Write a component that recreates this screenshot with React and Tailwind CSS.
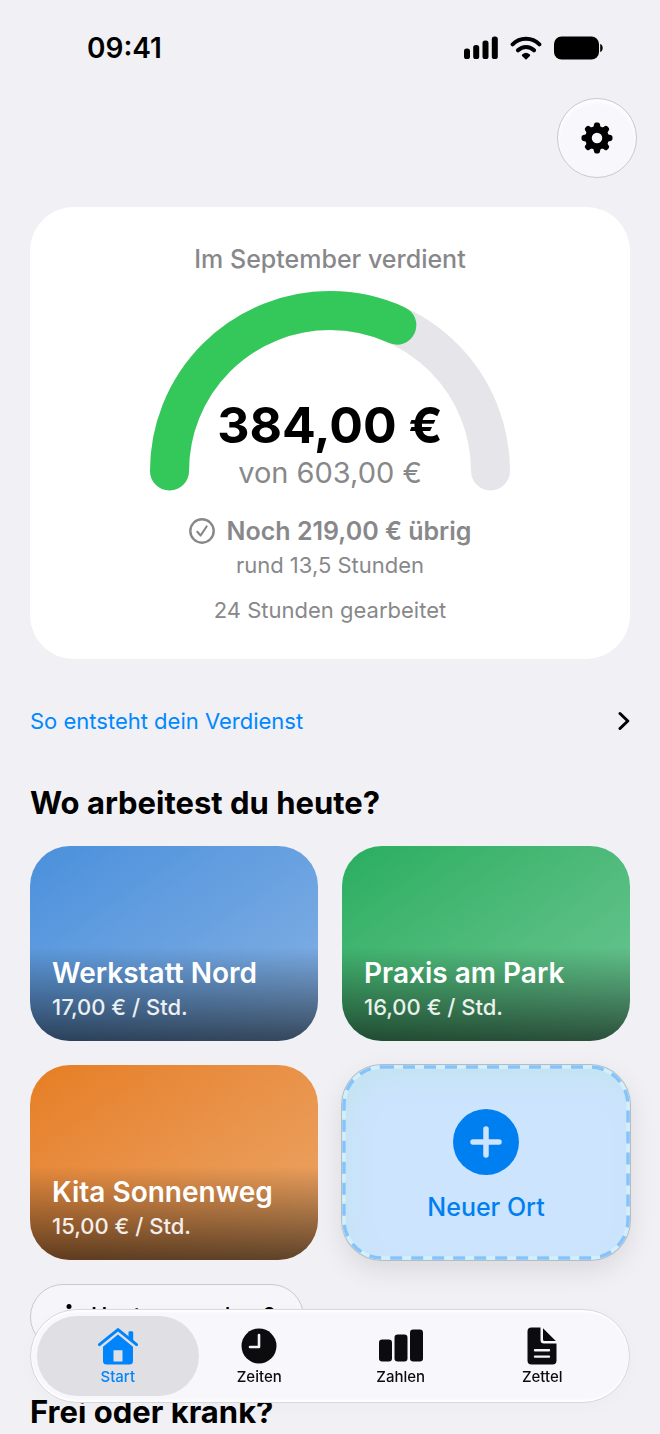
import React, { useState } from 'react';

const EARNED = 384;
const LIMIT = 603;

const workplaces = [
  { id: 'werkstatt', name: 'Werkstatt Nord', rate: '17,00 € / Std.', color: 'from-[#4a90dc] to-[#86b2e4]' },
  { id: 'praxis', name: 'Praxis am Park', rate: '16,00 € / Std.', color: 'from-[#27ae60] to-[#6dc795]' },
  { id: 'kita', name: 'Kita Sonnenweg', rate: '15,00 € / Std.', color: 'from-[#e67e22] to-[#eba768]' },
];

const HomeIcon = () => (
  <svg viewBox="0 0 42 38" className="h-[38px] w-[42px]" fill="currentColor" aria-hidden="true">
    <path d="M31.5 5.5a1.3 1.3 0 0 1 1.3-1.3h2.1a1.3 1.3 0 0 1 1.3 1.3V14l-4.7-4z" />
    <path d="M2.4 17.6 21 2.6l18.6 15" fill="none" stroke="currentColor" strokeWidth="3" strokeLinecap="round" strokeLinejoin="round" />
    <path d="M21 7.6 36 19.8V34a3.6 3.6 0 0 1-3.6 3.6H9.6A3.6 3.6 0 0 1 6 34V19.8zM16.5 23.2v11.4h9V23.2z" fillRule="evenodd" />
  </svg>
);

const ClockIcon = () => (
  <svg viewBox="0 0 36 36" className="size-9" aria-hidden="true">
    <circle cx="18" cy="18" r="17.5" fill="currentColor" />
    <path d="M18 7v12H9" fill="none" stroke="#f4f4f8" strokeWidth="2.6" strokeLinecap="round" strokeLinejoin="round" />
  </svg>
);

const BarsIcon = () => (
  <svg viewBox="0 0 44 34" className="h-[34px] w-11" fill="currentColor" aria-hidden="true">
    <rect x="0" y="10.5" width="13" height="22" rx="3.2" />
    <rect x="15.5" y="5.5" width="13" height="27" rx="3.2" />
    <rect x="31" y="0.5" width="13" height="32" rx="3.2" />
  </svg>
);

const NoteIcon = () => (
  <svg viewBox="0 0 30 38" className="h-[38px] w-[30px]" aria-hidden="true">
    <path d="M4.5 .5h9V13a3.5 3.5 0 0 0 3.5 3.5h12.500v17a4 4 0 0 1-4 4h-21a4 4 0 0 1-4-4v-29a4 4 0 0 1 4-4z" fill="currentColor" />
    <path d="M16 1.2 28.800 14H17.500a1.500 1.500 0 0 1-1.500-1.500z" fill="currentColor" />
    <path d="M8 23.300h14M8 29.600h14" stroke="#f4f4f8" strokeWidth="2.4" strokeLinecap="round" />
  </svg>
);

const tabs = [
  { id: 'start', label: 'Start', Icon: HomeIcon },
  { id: 'zeiten', label: 'Zeiten', Icon: ClockIcon },
  { id: 'zahlen', label: 'Zahlen', Icon: BarsIcon },
  { id: 'zettel', label: 'Zettel', Icon: NoteIcon },
];

const StatusBar = () => (
  <div className="flex h-24 items-center justify-between pr-14 pl-[87px]">
    <span className="text-[28px] leading-8 font-semibold">09:41</span>
    <div className="flex items-center gap-3">
      <svg viewBox="0 0 35 24" className="h-6 w-[35px]" aria-hidden="true">
        <rect x="1" y="12.5" width="6" height="10.5" rx="2.6" />
        <rect x="10.2" y="9" width="6" height="14" rx="2.6" />
        <rect x="19.5" y="4.5" width="6" height="18.5" rx="2.6" />
        <rect x="28.8" y="0.5" width="6" height="22.5" rx="2.6" />
      </svg>
      <svg viewBox="0 0 32 24" className="h-6 w-8" aria-hidden="true">
        <path d="M2.6 8.3a19 19 0 0 1 26.8 0M8 14.3a11.5 11.5 0 0 1 16 0" fill="none" stroke="#000" strokeWidth="4" strokeLinecap="round" />
        <path d="M16 23.8l-3.700-3.500a1.400 1.400 0 0 1 .1-2.100 5.600 5.600 0 0 1 7.200 0 1.400 1.400 0 0 1 .1 2.100z" />
      </svg>
      <svg viewBox="0 0 50 24" className="h-6 w-[50px]" aria-hidden="true">
        <rect x="0" y="0.5" width="45" height="23" rx="7.5" />
        <path d="M46.2 8c3.300 1 3.300 7 0 8z" />
      </svg>
    </div>
  </div>
);

const GearIcon = () => (
  <svg viewBox="-16 -16 32 32" className="size-8" aria-hidden="true">
    {[0, 45, 90, 135, 180, 225, 270, 315].map((angle) => (
      <path key={angle} d="M-5 -9.5C-3.4 -11 -3.2 -12 -3 -13.6Q-2.7 -15.5 -1 -15.5H1Q2.7 -15.5 3 -13.6C3.2 -12 3.4 -11 5 -9.5z" transform={`rotate(${angle})`} />
    ))}
    <circle r="8.5" fill="none" stroke="#000" strokeWidth="6.5" />
  </svg>
);

const Gauge = ({ value, max }) => {
  const arc = 'M19.5 180a160.5 160.5 0 0 1 321 0';
  return (
    <svg viewBox="0 0 360 200" className="col-start-1 row-start-1 h-[200px] w-[360px]" fill="none" strokeWidth="39" strokeLinecap="round" aria-hidden="true">
      <path d={arc} stroke="#e5e5ea" />
      <path d={arc} stroke="#34c759" pathLength="100" strokeDasharray={`${(value / max) * 100} 200`} />
    </svg>
  );
};

const EarningsCard = () => (
  <section className="flex flex-col items-center rounded-[44px] bg-white pt-9 pb-[35px] text-[#88888b]">
    <h1 className="text-[25px] leading-8 font-medium">Im September verdient</h1>
    <div className="mt-4 grid justify-items-center">
      <Gauge value={EARNED} max={LIMIT} />
      <div className="col-start-1 row-start-1 flex flex-col items-center self-end">
        <p className="text-[50px] leading-[60px] font-bold text-black">384,00 €</p>
        <p className="text-[29px] leading-9">von 603,00 €</p>
      </div>
    </div>
    <p className="mt-6 flex items-center gap-3 text-[25px] leading-8 font-semibold">
      <svg viewBox="0 0 26 26" className="size-[26px]" fill="none" stroke="currentColor" strokeLinecap="round" strokeLinejoin="round" aria-hidden="true">
        <circle cx="13" cy="13" r="11.7" strokeWidth="2.4" />
        <path d="M8.3 13.8l3.3 3.700 6-9" strokeWidth="2.2" />
      </svg>
      Noch 219,00 € übrig
    </p>
    <p className="mt-1 text-[22px] leading-7">rund 13,5 Stunden</p>
    <p className="mt-[17px] text-[22px] leading-7">24 Stunden gearbeitet</p>
  </section>
);

const PlaceCard = ({ place }) => (
  <button type="button" className={`flex h-[195px] flex-col justify-end overflow-hidden rounded-[40px] bg-linear-to-br text-left text-white ${place.color}`}>
    <span className="flex w-full flex-col bg-linear-to-b from-black/0 via-black/30 to-black/60 px-[22px] pt-2 pb-[18px]">
      <span className="text-[28px] leading-9 font-semibold">{place.name}</span>
      <span className="text-[22px] leading-8 font-medium text-white/90">{place.rate}</span>
    </span>
  </button>
);

const NewPlaceCard = () => (
  <button type="button" className="relative flex h-[195px] flex-col items-center justify-center gap-4 rounded-[40px] bg-[#cce4fd] pt-1.5 text-[#007ff0] shadow-[0_0_0_1px_#b4bcc4,0_10px_28px_rgba(0,0,0,0.1),inset_8px_14px_24px_rgba(192,226,236,0.7)]">
    <svg className="absolute inset-0 size-full" fill="none" aria-hidden="true">
      <rect x="2" y="2" rx="38" className="h-[calc(100%-4px)] w-[calc(100%-4px)]" stroke="#d3effb" strokeWidth="3.5" />
      <rect x="2" y="2" rx="38" className="h-[calc(100%-4px)] w-[calc(100%-4px)]" stroke="#86c3fa" strokeWidth="3.5" strokeDasharray="12 9" />
    </svg>
    <svg viewBox="0 0 66 66" className="size-[66px]" aria-hidden="true">
      <circle cx="33" cy="33" r="33" fill="#007ff0" />
      <path d="M33 20v26M20 33h26" stroke="#cce4fd" strokeWidth="5.5" strokeLinecap="round" />
    </svg>
    <span className="text-[25px] leading-8 font-medium">Neuer Ort</span>
  </button>
);

const TabBar = ({ active, onSelect }) => (
  <nav className="fixed inset-x-[30px] bottom-[31px] grid h-[94px] grid-cols-4 rounded-full border border-[#d8d8dc] bg-[#f8f8fc] px-4 shadow-[inset_0_2px_2px_#fff,inset_0_-2px_2px_#fff,0_4px_20px_rgba(0,0,0,0.02)]">
    {tabs.map(({ id, label, Icon }) => {
      const selected = id === active;
      return (
        <button key={id} type="button" onClick={() => onSelect(id)} className={`relative flex flex-col items-center pt-[17px] ${selected ? 'text-[#0084fb]' : 'text-[#0c0c0e]'}`}>
          {selected && <span className="absolute -inset-x-2.5 inset-y-1.5 rounded-full bg-[#e0e0e4]" />}
          <span className="relative flex h-[38px] items-center">
            <Icon />
          </span>
          <span className="relative mt-0.5 text-[15px] leading-5 font-medium">{label}</span>
        </button>
      );
    })}
  </nav>
);

const App = () => {
  const [activeTab, setActiveTab] = useState('start');

  return (
    <div className="min-h-screen bg-[#f1f0f5] font-[Inter,'Liberation_Sans',sans-serif] text-black">
      <StatusBar />
      <main className="px-[30px]">
        <div className="-mr-[7px] flex justify-end pt-0.5">
          <button type="button" aria-label="Einstellungen" className="flex size-20 items-center justify-center rounded-full border border-[#c9c9ce] bg-[#f8f8fc] shadow-[inset_0_3px_4px_#fff]">
            <GearIcon />
          </button>
        </div>

        <div className="mt-[29px]">
          <EarningsCard />
        </div>

        <a href="#verdienst" className="mt-[46px] flex items-center justify-between text-[22px] leading-8 text-[#0088ff]">
          So entsteht dein Verdienst
          <svg viewBox="0 0 12 20" className="h-5 w-3" fill="none" stroke="#000" strokeWidth="3" strokeLinecap="round" strokeLinejoin="round" aria-hidden="true">
            <path d="M2 2.5 9.8 10 2 17.5" />
          </svg>
        </a>

        <h2 className="mt-[46px] text-[31px] leading-10 font-bold">Wo arbeitest du heute?</h2>
        <div className="mt-[23px] grid grid-cols-2 gap-6">
          {workplaces.map((place) => (
            <PlaceCard key={place.id} place={place} />
          ))}
          <NewPlaceCard />
        </div>

        <button type="button" className="mt-6 flex h-[66px] items-center gap-3 rounded-full border border-[#c9c9ce] bg-[#f6f6fa] px-7 pb-1 text-[22px] font-medium">
          <svg viewBox="0 0 20 30" className="h-[30px] w-5" fill="none" stroke="#000" strokeWidth="3" strokeLinecap="round" strokeLinejoin="round" aria-hidden="true">
            <circle cx="10" cy="6.5" r="2.5" fill="#000" stroke="none" />
            <path d="M9 12l-1 6 5 4 1 6M8 19l-1 4-4 5M8 12l-4 3-1 4M10 12l2 4 4 1" />
          </svg>
          Heute woanders?
        </button>

        <h2 className="mt-[42px] text-[31px] leading-10 font-bold">Frei oder krank?</h2>
      </main>
      <TabBar active={activeTab} onSelect={setActiveTab} />
    </div>
  );
};

export default App;
